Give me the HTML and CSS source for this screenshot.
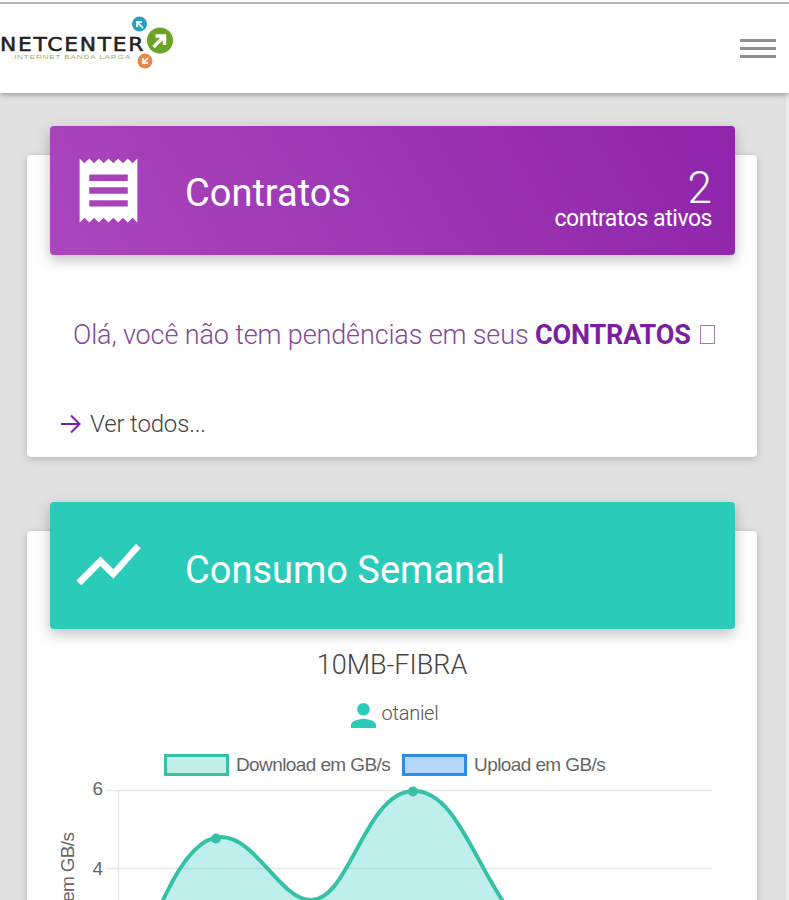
FILE: index.html
```html
<!DOCTYPE html>
<html lang="pt-BR">

<head>
    <meta charset="UTF-8">
    <meta name="viewport" content="width=device-width, initial-scale=1.0">
    <title>Netcenter</title>
    <link rel="stylesheet" href="styles.css">
</head>

<body>
    <header class="navbar">
        <svg class="logo" width="180" height="64" viewBox="0 0 180 64">
            <text class="logo-name" x="0" y="43" textLength="145" lengthAdjust="spacingAndGlyphs">NETCENTER</text>
            <text class="logo-tagline" x="14" y="51" textLength="117" lengthAdjust="spacingAndGlyphs">INTERNET BANDA LARGA</text>
            <circle cx="139.5" cy="16" r="7.5" fill="#2a9dbd" />
            <path d="M143 20l-6-6m0 5v-5h5" fill="none" stroke="#d9f5fb" stroke-width="2" />
            <circle cx="160" cy="32.5" r="13" fill="#6da325" />
            <path d="M153.5 39l10-10m-8-1h9v9" fill="none" stroke="#fff" stroke-width="3.5" />
            <circle cx="145" cy="53" r="7.5" fill="#e28a4e" />
            <path d="M148 50l-5 5m0-5v5h5" fill="none" stroke="#ffe9d6" stroke-width="2" />
        </svg>
        <button class="menu-button" aria-label="Menu">
            <span></span>
            <span></span>
            <span></span>
        </button>
    </header>

    <main class="content">
        <section class="card card-contracts">
            <div class="card-header purple">
                <svg class="card-icon" viewBox="0 0 24 24" width="77" height="77">
                    <path d="M18 17H6v-2h12v2zm0-4H6v-2h12v2zm0-4H6V7h12v2zM3 22l1.500-1.500L6 22l1.500-1.500L9 22l1.500-1.500L12 22l1.500-1.500L15 22l1.500-1.500L18 22l1.500-1.500L21 22V2l-1.500 1.500L18 2l-1.500 1.500L15 2l-1.500 1.500L12 2l-1.500 1.500L9 2 7.500 3.500 6 2 4.500 3.500 3 2v20z" />
                </svg>
                <h2>Contratos</h2>
                <div class="counter">
                    <span class="counter-value">2</span>
                    <span class="counter-label">contratos ativos</span>
                </div>
            </div>
            <p class="message">Olá, você não tem pendências em seus <strong>CONTRATOS</strong> <span class="glyph-box"></span></p>
            <a class="more" href="#">
                <svg viewBox="0 0 20 20" width="20" height="20">
                    <path d="M0 10h18M10 1.500l8.500 8.500-8.500 8.500" />
                </svg>
                <span>Ver todos...</span>
            </a>
        </section>

        <section class="card card-usage">
            <div class="card-header teal">
                <svg class="card-icon trend" viewBox="0 0 24 24" width="77" height="77">
                    <path d="M3.500 18.490l6-6.010 4 4L22 6.920l-1.410-1.410-7.090 7.970-4-4L2 16.990z" />
                </svg>
                <h2>Consumo Semanal</h2>
            </div>
            <h3 class="plan">10MB-FIBRA</h3>
            <div class="user">
                <svg viewBox="4 4 16 16" width="25" height="25">
                    <path d="M12 12c2.210 0 4-1.790 4-4s-1.790-4-4-4-4 1.790-4 4 1.790 4 4 4zm0 2c-2.670 0-8 1.340-8 4v2h16v-2c0-2.660-5.330-4-8-4z" />
                </svg>
                <span>otaniel</span>
            </div>
            <div class="legend">
                <span class="swatch download"></span>
                <span class="legend-download">Download em GB/s</span>
                <span class="swatch upload"></span>
                <span>Upload em GB/s</span>
            </div>
            <svg class="chart" viewBox="27 777 730 300" width="730" height="300">
                <path class="grid" d="M107 790.500H712M107 868.500H712M118.500 790V1077" />
                <text class="tick" x="103" y="795" text-anchor="end">6</text>
                <text class="tick" x="103" y="875" text-anchor="end">4</text>
                <text class="axis-label" transform="translate(74 986) rotate(-90)" textLength="154">Download em GB/s</text>
                <path class="area" d="M121 1024C147 930 180 837 221 837C256 837 280 900 311 900C350 900 365 791 414 791C463 791 479 890 533 937L605 1024Z" />
                <path class="line" d="M121 1024C147 930 180 837 221 837C256 837 280 900 311 900C350 900 365 791 414 791C463 791 479 890 533 937L605 1024" />
                <circle class="point" cx="216" cy="838.5" r="5" />
                <circle class="point" cx="413" cy="791.5" r="5" />
            </svg>
        </section>
    </main>
</body>

</html>
```
FILE: styles.css
```css
:root {
    --purple: #7b1fa2;
    --teal: #2bcbba;
    --background: #e1e1e1;
    --text-muted: #666;
}

* {
    box-sizing: border-box;
}

body {
    margin: 0;
    height: 900px;
    overflow: hidden;
    background: var(--background);
    font-family: Roboto, sans-serif;
    font-weight: 300;
}

.navbar {
    display: flex;
    justify-content: space-between;
    align-items: flex-start;
    height: 93px;
    padding: 5px 13px 0 0;
    background: linear-gradient(#fff 2px, #b5b5b7 2px, #b5b5b7 4px, #fff 4px);
    box-shadow: 0 2px 5px rgba(0, 0, 0, 0.3);
    position: relative;
}

.logo {
    margin-top: 3px;
}

.logo-name {
    font-family: "DejaVu Sans", sans-serif;
    font-size: 19px;
    font-weight: 400;
    letter-spacing: 1.5px;
    fill: #222;
    stroke: #222;
    stroke-width: 0.5px;
}

.logo-tagline {
    font-family: "Liberation Sans", Arial, sans-serif;
    font-size: 5px;
    font-weight: 400;
    letter-spacing: 0.5px;
    fill: #9bb068;
}

.menu-button {
    display: flex;
    flex-direction: column;
    gap: 5px;
    margin-top: 34px;
    padding: 0;
    border: 0;
    background: none;
}

.menu-button span {
    width: 36px;
    height: 3px;
    background: #909090;
}

.content {
    height: 807px;
    padding: 62px 29px 0 27px;
    border-right: 3px solid #e9e9e9;
    overflow: hidden;
}

.card {
    display: flow-root;
    width: 730px;
    background: #fff;
    border-radius: 4px;
    box-shadow: 0 2px 7px rgba(0, 0, 0, 0.2);
}

.card-contracts {
    height: 302px;
    margin-bottom: 74px;
}

.card-usage {
    height: 600px;
}

.card-header {
    display: flex;
    align-items: center;
    height: 129px;
    margin: -29px 22px 0 23px;
    padding: 0 23px 0 20px;
    border-radius: 4px;
    color: #fff;
    box-shadow: 0 5px 14px rgba(0, 0, 0, 0.25);
}

.purple {
    background: linear-gradient(60deg, #ab47bc, #8e24aa);
}

.teal {
    height: 127px;
    background: var(--teal);
}

.card-icon {
    fill: #fff;
}

.trend {
    margin-top: -3px;
}

.card-header h2 {
    margin: 4px 0 0 38px;
    font-size: 38px;
    font-weight: 400;
}

.teal h2 {
    margin-top: 8px;
}

.counter {
    display: flex;
    flex-direction: column;
    align-items: flex-end;
    margin: 18px 0 0 auto;
}

.counter-value {
    font-size: 44px;
    line-height: 38px;
}

.counter-label {
    font-size: 23px;
    line-height: 24px;
    font-weight: 400;
    letter-spacing: -0.45px;
}

.message {
    margin: 62px 0 0 46px;
    font-size: 27px;
    line-height: 36px;
    letter-spacing: -0.13px;
    color: #85489a;
    white-space: nowrap;
}

.message strong {
    font-weight: 700;
    color: var(--purple);
}

.glyph-box {
    display: inline-block;
    width: 15px;
    height: 19px;
    margin-left: 3px;
    border: 1px solid #a37aaa;
}

.more {
    display: flex;
    align-items: center;
    gap: 9px;
    margin: 56px 0 0 34px;
    font-size: 24px;
    line-height: 30px;
    letter-spacing: -0.15px;
    color: #444;
    text-decoration: none;
}

.more svg {
    fill: none;
    stroke: var(--purple);
    stroke-width: 2;
}

.plan {
    margin: 20px 0 0;
    font-size: 27px;
    line-height: 32px;
    font-weight: 300;
    text-align: center;
    color: #444;
}

.user {
    display: flex;
    justify-content: center;
    align-items: center;
    gap: 6px;
    margin-top: 19px;
    padding-left: 5px;
    font-size: 20px;
    line-height: 28px;
    letter-spacing: -0.25px;
    color: #555;
}

.user svg {
    fill: var(--teal);
    margin-top: 3px;
}

.user span {
    margin-top: -2px;
}

.legend {
    display: flex;
    align-items: center;
    height: 24px;
    margin: 25px 0 0 137px;
    font-family: "Liberation Sans", Arial, sans-serif;
    font-size: 19px;
    font-weight: 400;
    letter-spacing: -0.6px;
    color: var(--text-muted);
    white-space: nowrap;
}

.swatch {
    width: 65px;
    height: 22px;
    margin-right: 7px;
    border: 3px solid;
}

.download {
    border-color: #36c1a7;
    background: #c0efe8;
}

.upload {
    border-color: #2f8ce4;
    background: #b3d6fa;
}

.legend-download {
    margin-right: 12px;
}

.chart {
    display: block;
}

.grid {
    fill: none;
    stroke: #e8e8e8;
    stroke-width: 1.5;
}

.tick,
.axis-label {
    font-family: "Liberation Sans", Arial, sans-serif;
    font-size: 19px;
    font-weight: 400;
    fill: var(--text-muted);
}

.area {
    fill: rgba(43, 203, 186, 0.3);
}

.line {
    fill: none;
    stroke: #36c1a7;
    stroke-width: 4;
}

.point {
    fill: #36c1a7;
}
```
